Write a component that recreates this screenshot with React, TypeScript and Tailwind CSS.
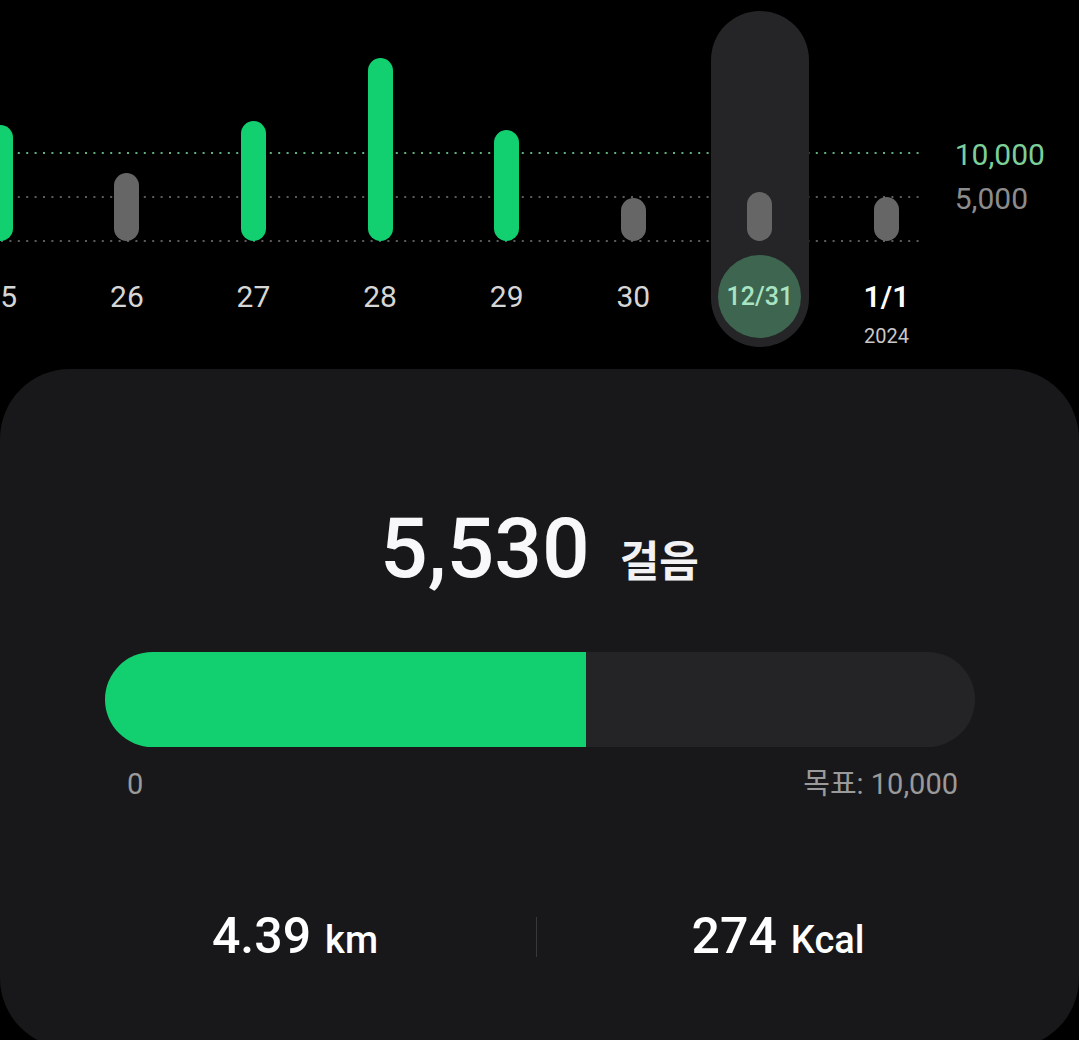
// Daily step chart with a selected day and summary card.
const days = [
  { label: "25", h: 116, hit: true },
  { label: "26", h: 68, hit: false },
  { label: "27", h: 120, hit: true },
  { label: "28", h: 183, hit: true },
  { label: "29", h: 111, hit: true },
  { label: "30", h: 43, hit: false },
  { label: "12/31", h: 49, hit: false, selected: true },
  { label: "1/1", h: 44, hit: false, year: "2024" },
];

function GridLines() {
  return (
    <svg className="absolute left-0 top-0" width="922" height="369">
      <line x1="1" y1="153" x2="922" y2="153" stroke="#62b07c" strokeWidth="2" strokeDasharray="2 6.4" />
      <line x1="1" y1="197" x2="922" y2="197" stroke="#5c5c5c" strokeWidth="2" strokeDasharray="2 6.4" />
      <line x1="1" y1="241" x2="922" y2="241" stroke="#5c5c5c" strokeWidth="2" strokeDasharray="2 6.4" />
    </svg>
  );
}

export default function App() {
  return (
    <div className="flex h-[1040px] w-[1079px] flex-col overflow-hidden bg-black font-['Roboto','Noto_Sans_CJK_KR',sans-serif]">
      {/* Chart */}
      <div className="relative h-[369px] shrink-0">
        <GridLines />
        <div className="relative flex h-full">
          <div className="ml-[-63px] flex h-full">
            {days.map((d) => (
              <div key={d.label} className="relative flex h-full w-[126.6px] flex-col items-center">
                {d.selected && (
                  <div className="absolute bottom-[22px] left-1/2 top-[11px] w-[98px] -translate-x-1/2 rounded-full bg-[#252527]" />
                )}
                <div className="relative flex h-[241px] items-end">
                  <div
                    className={d.hit ? "w-[25px] rounded-full bg-[#12cf6f]" : "w-[25px] rounded-full bg-[#666666]"}
                    style={{ height: d.h }}
                  />
                </div>
                {d.selected ? (
                  <div className="relative mt-[14px] flex size-[83px] items-center justify-center rounded-full bg-[#3d6550] text-[25px] font-medium text-[#a8e4c2]">
                    {d.label}
                  </div>
                ) : d.year ? (
                  <div className="mt-[40px] flex flex-col items-center">
                    <div className="text-[30px] font-semibold leading-[32px] text-white">{d.label}</div>
                    <div className="mt-[11px] text-[20px] leading-[24px] text-[#c8c8c8]">{d.year}</div>
                  </div>
                ) : (
                  <div className="mt-[40px] text-[30px] leading-[32px] text-[#d6d6d6]">{d.label}</div>
                )}
              </div>
            ))}
          </div>
          <div className="ml-[5px] flex flex-col pt-[133px] text-[30px] leading-[44px]">
            <span className="text-[#7ccf98]">10,000</span>
            <span className="text-[#8c8c8c]">5,000</span>
          </div>
        </div>
      </div>

      {/* Summary card */}
      <div className="flex h-[679px] shrink-0 flex-col rounded-[70px] bg-[#18181a]">
        <div className="mt-[138px] flex items-baseline justify-center gap-[30px]">
          <span className="text-[84px] font-medium leading-[84px] text-[#f8f8fb]">5,530</span>
          <span className="text-[43px] font-bold text-[#f2f2f4]">걸음</span>
        </div>

        <div className="ml-[105px] mr-[104px] mt-[57px] flex h-[95px] overflow-hidden rounded-full bg-[#242426]">
          <div className="h-full w-[55.3%] bg-[#12cf6f]" />
        </div>

        <div className="mt-[19px] flex justify-between px-[122px] text-[29px] leading-[36px] text-[#9a9a9a]">
          <span className="ml-[5px]">0</span>
          <span className="mr-[-1px]">목표: 10,000</span>
        </div>

        <div className="mt-[104px] flex items-center pl-[54px] pr-[60px] text-white">
          <div className="flex flex-1 items-baseline justify-center gap-[14px]">
            <span className="text-[50px] font-medium leading-[60px]">4.39</span>
            <span className="text-[38px] font-medium">km</span>
          </div>
          <div className="h-[40px] w-px bg-[#38383a]" />
          <div className="flex flex-1 items-baseline justify-center gap-[14px]">
            <span className="text-[50px] font-medium leading-[60px]">274</span>
            <span className="text-[38px] font-medium">Kcal</span>
          </div>
        </div>
      </div>
    </div>
  );
}
